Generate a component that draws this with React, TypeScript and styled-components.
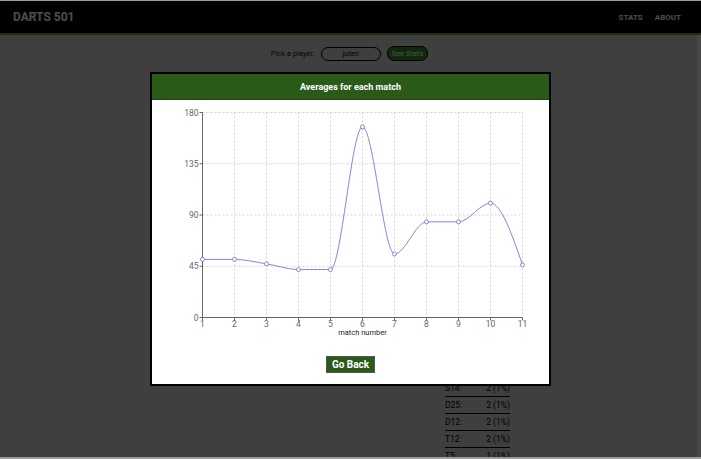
import React from "react";
import styled, { createGlobalStyle } from "styled-components";

const GlobalStyle = createGlobalStyle`
  html, body {
    margin: 0;
    padding: 0;
    height: 100%;
    overflow: hidden;
    background: #9c9c9c;
    font-family: Roboto, "Liberation Sans", Arial, sans-serif;
  }
  #root { height: 100%; }
`;

const Frame = styled.div`
  position: relative;
  margin-top: 1px;
  height: calc(100vh - 3px);
  display: flex;
  flex-direction: column;
  background: #d3d3d3;
  overflow: hidden;
`;

const NavBar = styled.header`
  flex: none;
  height: 32px;
  background: #000;
  border-bottom: 2px solid #5a9b3d;
  display: flex;
  align-items: center;
  justify-content: space-between;
  padding: 0 20px 0 13px;
`;

const Brand = styled.div`
  color: #fff;
  font-weight: 700;
  font-size: 12px;
`;

const NavLinks = styled.nav`
  display: flex;
  gap: 12px;
`;

const NavLink = styled.a`
  color: #fff;
  font-weight: 700;
  font-size: 8px;
  text-decoration: none;
`;

const Main = styled.main`
  flex: 1;
  min-height: 0;
  border-right: 4px solid #f1f1f1;
  display: flex;
  flex-direction: column;
  overflow: hidden;
`;

const PickerRow = styled.div`
  display: flex;
  justify-content: center;
  align-items: center;
  gap: 6px;
  padding-top: 11px;
  padding-left: 2px;
  font-size: 7.5px;
  color: #111;
`;

const PlayerInput = styled.input`
  box-sizing: border-box;
  width: 60px;
  height: 14px;
  padding: 0;
  border: 1px solid #000;
  border-radius: 7px;
  background: transparent;
  text-align: center;
  font-family: inherit;
  font-size: 7px;
  color: #000;
`;

const SeeStatsButton = styled.button`
  box-sizing: border-box;
  height: 15px;
  padding: 0 4px;
  border: 1px solid #000;
  border-radius: 7px;
  background: #3b8a26;
  color: #fff;
  font-family: inherit;
  font-size: 7.5px;
`;

const StatsLayout = styled.div`
  display: grid;
  grid-template-columns: 1fr 65px 187px;
  margin-top: 13px;
`;

const StatsTable = styled.div`
  grid-column: 2;
  display: flex;
  flex-direction: column;
`;

const StatRow = styled.div`
  display: flex;
  justify-content: space-between;
  align-items: center;
  height: 16px;
  border-bottom: 1px solid #000;
  font-size: 8.5px;
  color: #000;
`;

const Overlay = styled.div`
  position: absolute;
  inset: 0;
  background: rgba(0, 0, 0, 0.7);
  display: grid;
  place-items: center;
`;

const Modal = styled.section`
  box-sizing: border-box;
  width: 401px;
  height: 314px;
  border: 2px solid #000;
  background: #fff;
  display: flex;
  flex-direction: column;
`;

const ModalHeader = styled.h2`
  box-sizing: border-box;
  margin: 0;
  height: 26px;
  background: #2a5a18;
  border-bottom: 1px solid #1e4410;
  color: #fff;
  font-size: 9px;
  font-weight: 700;
  display: flex;
  align-items: center;
  justify-content: center;
`;

const ModalBody = styled.div`
  flex: 1;
  display: flex;
  flex-direction: column;
  align-items: center;
`;

const ChartSvg = styled.svg`
  display: block;
  width: 397px;
  height: 245px;
  font-family: Roboto, "Liberation Sans", Arial, sans-serif;
`;

const GoBackButton = styled.button`
  box-sizing: border-box;
  margin-top: 11px;
  height: 17px;
  padding: 0 5px;
  border: 1px solid #555;
  background: #2a5a18;
  color: #fff;
  font-family: inherit;
  font-size: 10px;
  font-weight: 700;
`;

const data = [51, 51, 47.1, 42.1, 42.1, 167.4, 55.8, 84, 84, 100.4, 46.2];
const X0 = 50.5;
const DX = 32;
const YTOP = 12.5;
const YBOT = 217.5;
const xAt = (i: number) => X0 + i * DX;
const yAt = (v: number) => YBOT - (v / 180) * (YBOT - YTOP);

const sgn = (x: number) => (x < 0 ? -1 : 1);

function monotonePath(pts: [number, number][]): string {
  const n = pts.length;
  const t: number[] = new Array(n).fill(0);
  for (let i = 1; i < n - 1; i++) {
    const [x0, y0] = pts[i - 1];
    const [x1, y1] = pts[i];
    const [x2, y2] = pts[i + 1];
    const h0 = x1 - x0;
    const h1 = x2 - x1;
    const s0 = (y1 - y0) / h0;
    const s1 = (y2 - y1) / h1;
    const p = (s0 * h1 + s1 * h0) / (h0 + h1);
    t[i] = (sgn(s0) + sgn(s1)) * Math.min(Math.abs(s0), Math.abs(s1), 0.5 * Math.abs(p)) || 0;
  }
  const slope2 = (a: [number, number], b: [number, number], tt: number) => {
    const h = b[0] - a[0];
    return h ? (3 * (b[1] - a[1]) / h - tt) / 2 : tt;
  };
  t[0] = slope2(pts[0], pts[1], t[1]);
  t[n - 1] = slope2(pts[n - 2], pts[n - 1], t[n - 2]);
  let d = `M${pts[0][0]},${pts[0][1]}`;
  for (let i = 1; i < n; i++) {
    const [x0, y0] = pts[i - 1];
    const [x1, y1] = pts[i];
    const dx = (x1 - x0) / 3;
    d += `C${x0 + dx},${y0 + dx * t[i - 1]},${x1 - dx},${y1 - dx * t[i]},${x1},${y1}`;
  }
  return d;
}

const yTicks = [0, 45, 90, 135, 180];

function AveragesChart() {
  const pts = data.map((v, i) => [xAt(i), yAt(v)] as [number, number]);
  const xEnd = xAt(data.length - 1);
  return (
    <ChartSvg viewBox="0 0 397 245">
      <g stroke="#d2d2d2" strokeDasharray="2 2" fill="none">
        {yTicks.slice(1).map((v) => (
          <line key={v} x1={X0} x2={xEnd} y1={yAt(v)} y2={yAt(v)} />
        ))}
        {data.map((_, i) => (
          <line key={i} x1={xAt(i)} x2={xAt(i)} y1={YTOP} y2={YBOT} />
        ))}
      </g>
      <g stroke="#666" fill="none">
        <line x1={X0} x2={X0} y1={YTOP} y2={YBOT} />
        <line x1={X0} x2={xEnd} y1={YBOT} y2={YBOT} />
        {yTicks.map((v) => (
          <line key={v} x1={X0 - 3} x2={X0} y1={yAt(v)} y2={yAt(v)} />
        ))}
        {data.map((_, i) => (
          <line key={i} x1={xAt(i)} x2={xAt(i)} y1={YBOT} y2={YBOT + 3} />
        ))}
      </g>
      <g fill="#666" fontSize="8.5">
        {yTicks.map((v) => (
          <text key={v} x={X0 - 4} y={yAt(v)} textAnchor="end" dominantBaseline="central">
            {v}
          </text>
        ))}
        {data.map((_, i) => (
          <text key={i} x={xAt(i)} y={YBOT + 6.5} textAnchor="middle" dominantBaseline="central">
            {i + 1}
          </text>
        ))}
      </g>
      <text
        x={(X0 + xEnd) / 2}
        y={232.5}
        textAnchor="middle"
        dominantBaseline="central"
        fontSize="7.5"
        fill="#222"
      >
        match number
      </text>
      <path d={monotonePath(pts)} fill="none" stroke="#8884d8" strokeWidth={1} />
      {pts.map(([x, y], i) => (
        <circle key={i} cx={x} cy={y} r={2} fill="#fff" stroke="#8884d8" strokeWidth={1} />
      ))}
    </ChartSvg>
  );
}

const stats: [string, string][] = [
  ["20:", "38 (16%)"],
  ["1:", "24 (10%)"],
  ["5:", "22 (9%)"],
  ["T20:", "14 (6%)"],
  ["19:", "11 (5%)"],
  ["18:", "9 (4%)"],
  ["3:", "8 (3%)"],
  ["17:", "7 (3%)"],
  ["12:", "7 (3%)"],
  ["T1:", "6 (3%)"],
  ["16:", "6 (3%)"],
  ["7:", "5 (2%)"],
  ["9:", "5 (2%)"],
  ["14:", "4 (2%)"],
  ["D20:", "4 (2%)"],
  ["T19:", "3 (1%)"],
  ["11:", "3 (1%)"],
  ["D16:", "3 (1%)"],
  ["S14:", "2 (1%)"],
  ["D25:", "2 (1%)"],
  ["D12:", "2 (1%)"],
  ["T12:", "2 (1%)"],
  ["T5:", "1 (1%)"],
  ["D8:", "1 (0%)"],
];

export default function App() {
  return (
    <>
      <GlobalStyle />
      <Frame>
        <NavBar>
          <Brand>DARTS 501</Brand>
          <NavLinks>
            <NavLink href="#">STATS</NavLink>
            <NavLink href="#">ABOUT</NavLink>
          </NavLinks>
        </NavBar>
        <Main>
          <PickerRow>
            <span>Pick a player:</span>
            <PlayerInput value="julien" readOnly />
            <SeeStatsButton>See Stats</SeeStatsButton>
          </PickerRow>
          <StatsLayout>
            <StatsTable>
              {stats.map(([k, v]) => (
                <StatRow key={k}>
                  <span>{k}</span>
                  <span>{v}</span>
                </StatRow>
              ))}
            </StatsTable>
          </StatsLayout>
        </Main>
        <Overlay>
          <Modal>
            <ModalHeader>Averages for each match</ModalHeader>
            <ModalBody>
              <AveragesChart />
              <GoBackButton>Go Back</GoBackButton>
            </ModalBody>
          </Modal>
        </Overlay>
      </Frame>
    </>
  );
}
